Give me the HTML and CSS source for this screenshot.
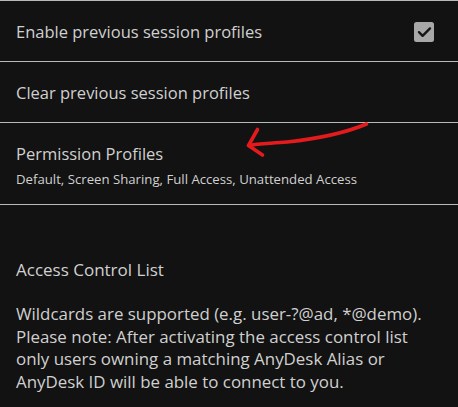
FILE: index.html
```html
<!DOCTYPE html>
<html lang="en">
<head>
<meta charset="utf-8">
<title>Settings</title>
<link rel="stylesheet" href="styles.css">
</head>
<body>
<div class="page">
  <div class="row row-check">
    <span class="title">Enable previous session profiles</span>
    <span class="checkbox">
      <svg width="20" height="20" viewBox="0 0 20 20"><path d="M5 10.2l3.6 3.6L16 6.4" fill="none" stroke="#161616" stroke-width="2.4" stroke-linecap="round" stroke-linejoin="round"/></svg>
    </span>
  </div>
  <div class="row">
    <span class="title">Clear previous session profiles</span>
  </div>
  <div class="row row-two">
    <span class="title">Permission Profiles</span>
    <span class="sub">Default, Screen Sharing, Full Access, Unattended Access</span>
  </div>
  <section class="acl">
    <h2 class="acl-title">Access Control List</h2>
    <p class="acl-text">Wildcards are supported (e.g. user-?@ad, *@demo). Please note: After activating the access control list only users owning a matching AnyDesk Alias or AnyDesk ID will be able to connect to you.</p>
  </section>
  <svg class="arrow" width="458" height="407" viewBox="0 0 458 407">
    <path d="M366.5 124 C 345 133, 315 139, 287 142 C 270 143.5, 258 143.5, 248.5 145.5" fill="none" stroke="#e41b1d" stroke-width="3.6" stroke-linecap="round"/>
    <path d="M257.5 129.5 L 248.5 145.5 L 262.5 155" fill="none" stroke="#e41b1d" stroke-width="3.6" stroke-linecap="round" stroke-linejoin="round"/>
  </svg>
</div>
</body>
</html>
```
FILE: styles.css
```css
html, body {
  margin: 0;
  padding: 0;
  background: #121212;
}
body {
  font-family: "Open Sans", "Noto Sans", sans-serif;
  color: #d0d0d0;
}
.page {
  position: relative;
  width: 458px;
  height: 407px;
  overflow: hidden;
  border-top: 1.5px solid #b9b9b9;
}
.row {
  display: flex;
  align-items: center;
  height: 61px;
  padding: 1px 16px 0;
  border-bottom: 1.5px solid #b9b9b9;
  box-sizing: border-box;
}
.row-check {
  justify-content: space-between;
  padding-right: 24px;
}
.row-two {
  height: 82px;
  padding-top: 3px;
  flex-direction: column;
  align-items: flex-start;
  justify-content: center;
  gap: 7px;
}
.title {
  font-size: 16.5px;
  line-height: 20px;
}
.sub {
  font-size: 13.2px;
  line-height: 16px;
}
.checkbox {
  width: 20px;
  height: 20px;
  border-radius: 2.5px;
  background: #a8a8a8;
  display: flex;
}
.acl {
  padding: 55px 22px 0 16px;
}
.acl-title {
  margin: 0;
  font-weight: normal;
  font-size: 17px;
  line-height: 20px;
}
.acl-text {
  margin: 23px 0 0;
  font-size: 16.9px;
  line-height: 22.6px;
}
.arrow {
  position: absolute;
  left: 0;
  top: -1.5px;
  pointer-events: none;
}
```
